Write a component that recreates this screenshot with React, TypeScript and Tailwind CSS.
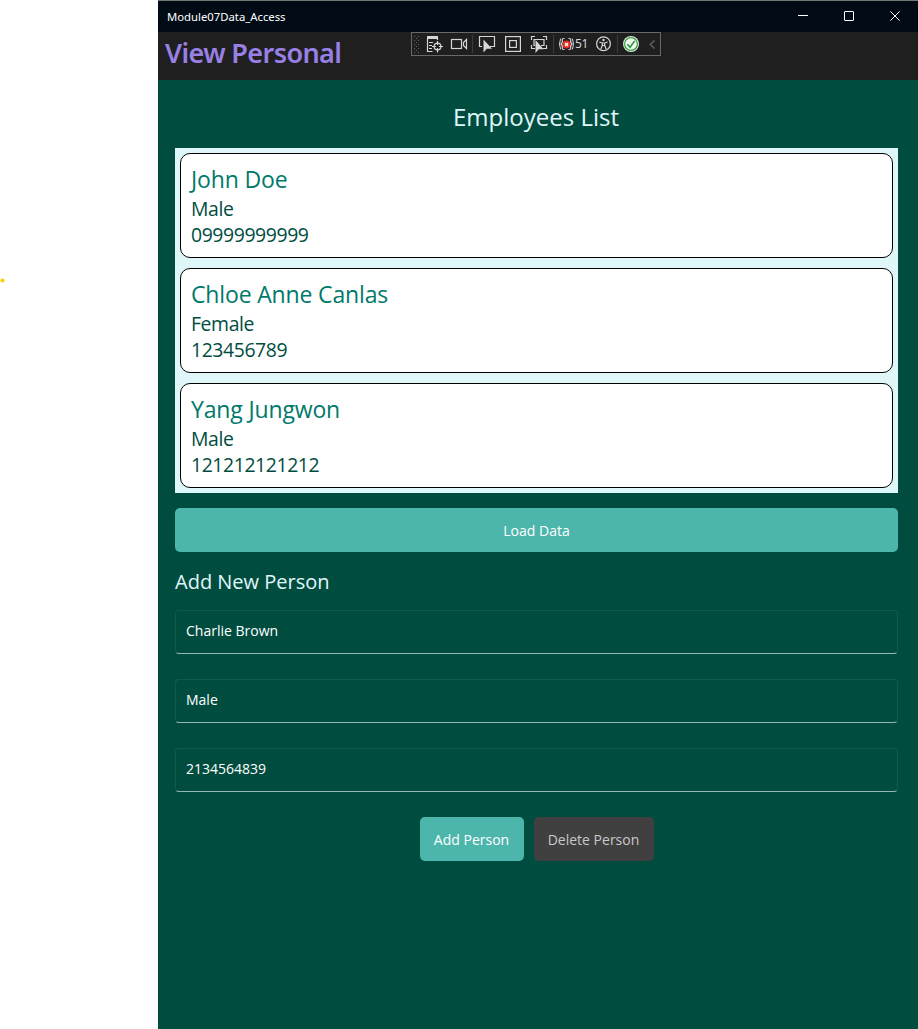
import React from "react";

const people = [
  { name: "John Doe", gender: "Male", contact: "09999999999" },
  { name: "Chloe Anne Canlas", gender: "Female", contact: "123456789" },
  { name: "Yang Jungwon", gender: "Male", contact: "121212121212" },
];

const fields = ["Charlie Brown", "Male", "2134564839"];

function TitleBar() {
  return (
    <header className="flex h-8 items-center justify-between border-t border-[#747874] bg-[#000b15] pl-[9px] text-white">
      <span className="font-['Noto_Sans',sans-serif] text-[11.3px] leading-4">Module07Data_Access</span>
      <div className="flex h-full">
        <svg width="46" height="31" viewBox="0 0 46 31" fill="none" stroke="#fff" shapeRendering="crispEdges">
          <path d="M18 14.5h10" />
        </svg>
        <svg width="46" height="31" viewBox="0 0 46 31" fill="none" stroke="#fff">
          <rect x="18.5" y="10.5" width="9" height="9" rx=".5" />
        </svg>
        <svg width="46" height="31" viewBox="0 0 46 31" fill="none" stroke="#fff">
          <path d="M18.3 10.3l9.4 9.4M27.7 10.3l-9.4 9.4" />
        </svg>
      </div>
    </header>
  );
}

function DebugToolbar() {
  return (
    <div className="absolute top-0 left-[253px] h-6 w-[250px] border border-[#686868] bg-[#1f1f1f]">
      <svg className="block" width="248" height="22" viewBox="412 33 248 22" fill="none" stroke="#d6d6d6" strokeWidth="1.2">
        <g stroke="#606060" strokeWidth="1" strokeDasharray="1 3">
          <path d="M414.5 36v17M418.5 36v17" />
          <path d="M416.5 38v15" />
        </g>
        <path d="M427 37.5h11" strokeWidth="3" />
        <path d="M427.5 38v13.5h5M437.5 38v2M429 42.5h4M429 45.5h3M429 48.5h3" />
        <circle cx="437.5" cy="46.5" r="3.4" />
        <path d="M437.5 41v4M437.5 48v4.5M432 46.5h4M439 46.5h4" />
        <rect x="451.5" y="39.5" width="10" height="9" />
        <path d="M463.5 42.5l3-3v9l-3-3z" />
        <path d="M472.5 35v18M553.5 35v18M617.5 35v18" stroke="#3c3c3c" strokeWidth="1" />
        <path d="M482 46.5h-2.5v-10h15v10H490" />
        <path d="M483.5 39.5v13l3.3-3.7h5.2z" fill="#d6d6d6" stroke="none" />
        <rect x="505.6" y="36.6" width="14.8" height="14.8" />
        <rect x="509.6" y="40.6" width="6.8" height="6.8" />
        <path d="M531.5 40v-3.5h3.5M543 36.5h3.5V40M546.5 45v3.5H543M535 48.5h-3.5V45" />
        <path d="M535 45.5h-1v-6h10v6h-3" />
        <path d="M535.5 40v13l3.2-3.7h5z" fill="#d6d6d6" stroke="none" />
        <path d="M564.5 38.5h-1.2q-1 0-1 1.2v2.8l-1.4 1.5 1.4 1.5v2.8q0 1.2 1 1.2h1.2M568.5 38.5h1.2q1 0 1 1.2v2.8l1.4 1.5-1.4 1.5v2.8q0 1.2-1 1.2h-1.2" />
        <path d="M560.6 38.6q-2.2 5.4 0 10.8M572.4 38.6q2.2 5.4 0 10.8" strokeWidth="1" />
        <circle cx="566.5" cy="44.5" r="3.9" fill="#ed2b24" stroke="none" />
        <path d="M565 43l3 3M568 43l-3 3" stroke="#fff" />
        <circle cx="603.5" cy="43.7" r="6.9" />
        <circle cx="603.5" cy="40" r="1.2" fill="#d6d6d6" stroke="none" />
        <path d="M599.3 42l3 1h2.4l3-1M602.3 43v2.5l-1.6 4M604.7 43v2.5l1.6 4M602.3 45.5h2.4" />
        <circle cx="631" cy="44" r="8" fill="#dcebdc" stroke="none" />
        <circle cx="631" cy="44" r="6.4" fill="#f2f7f2" stroke="#36a241" />
        <path d="M627.3 44.3l2.8 3 4.6-6.4" stroke="#28963a" strokeWidth="1.6" />
        <path d="M654.5 40.5l-4.3 4 4.3 4" stroke="#666" />
        <text x="575" y="48" fill="#d6d6d6" stroke="none" className="font-['Noto_Sans',sans-serif] text-[12px] tracking-[-0.4px]">
          51
        </text>
      </svg>
    </div>
  );
}

export default function App() {
  return (
    <div className="flex h-[1029px] w-[918px] overflow-hidden bg-white font-['Open_Sans','Noto_Sans',sans-serif]">
      <aside className="w-[158px] shrink-0 pt-[278px]">
        <svg className="block" width="6" height="6" viewBox="0 0 6 6">
          <circle cx="2.5" cy="2.5" r="2.1" fill="#ffce08" />
        </svg>
      </aside>

      <div className="flex w-[760px] flex-col bg-[#004d40]">
        <TitleBar />
        <div className="relative h-12 bg-[#1f1f1f] pl-[7px]">
          <h1 className="font-['Noto_Sans',sans-serif] text-[27px] leading-[42px] font-semibold tracking-[-0.6px] whitespace-nowrap text-[#9880e5]">
            View Personal
          </h1>
          <DebugToolbar />
        </div>

        <main className="flex flex-col pr-5 pl-[17px]">
          <h2 className="mt-5 mr-px text-center text-[24px] leading-[33px] text-[#e0f7fa]">Employees List</h2>

          <ul className="mt-[15px] flex flex-col gap-2.5 bg-[#e0f7fa] p-[5px]">
            {people.map((p) => (
              <li key={p.name} className="h-[105px] rounded-[10px] border border-black bg-white px-2.5 pt-2.5 whitespace-nowrap">
                <p className="text-[23px] leading-[31px] tracking-[-0.15px] text-[#00796b]">{p.name}</p>
                <div className="pt-px text-[19.4px] leading-[26px] tracking-[-0.4px] text-[#004d40]">
                  <p>{p.gender}</p>
                  <p>{p.contact}</p>
                </div>
              </li>
            ))}
          </ul>

          <button className="mt-[15px] h-11 rounded-[5px] bg-[#4db6ac] text-[14px] text-white">Load Data</button>

          <h3 className="mt-4 text-[20px] leading-[27px] text-[#e0f7fa]">Add New Person</h3>

          <div className="mt-[15px] flex flex-col gap-[25px]">
            {fields.map((value) => (
              <div
                key={value}
                className="h-11 rounded-[4px] border border-[#125a4e] border-b-[#94b9b3] px-2.5 pt-2.5 text-[14px] leading-5 text-white"
              >
                {value}
              </div>
            ))}
          </div>

          <div className="mt-[25px] flex justify-center gap-2.5 text-[14px]">
            <button className="h-11 w-[104px] rounded-[5px] bg-[#4db6ac] text-white">Add Person</button>
            <button className="h-11 w-[120px] rounded-[5px] bg-[#404040] text-[#c8c8c8]">Delete Person</button>
          </div>
        </main>
      </div>
    </div>
  );
}
